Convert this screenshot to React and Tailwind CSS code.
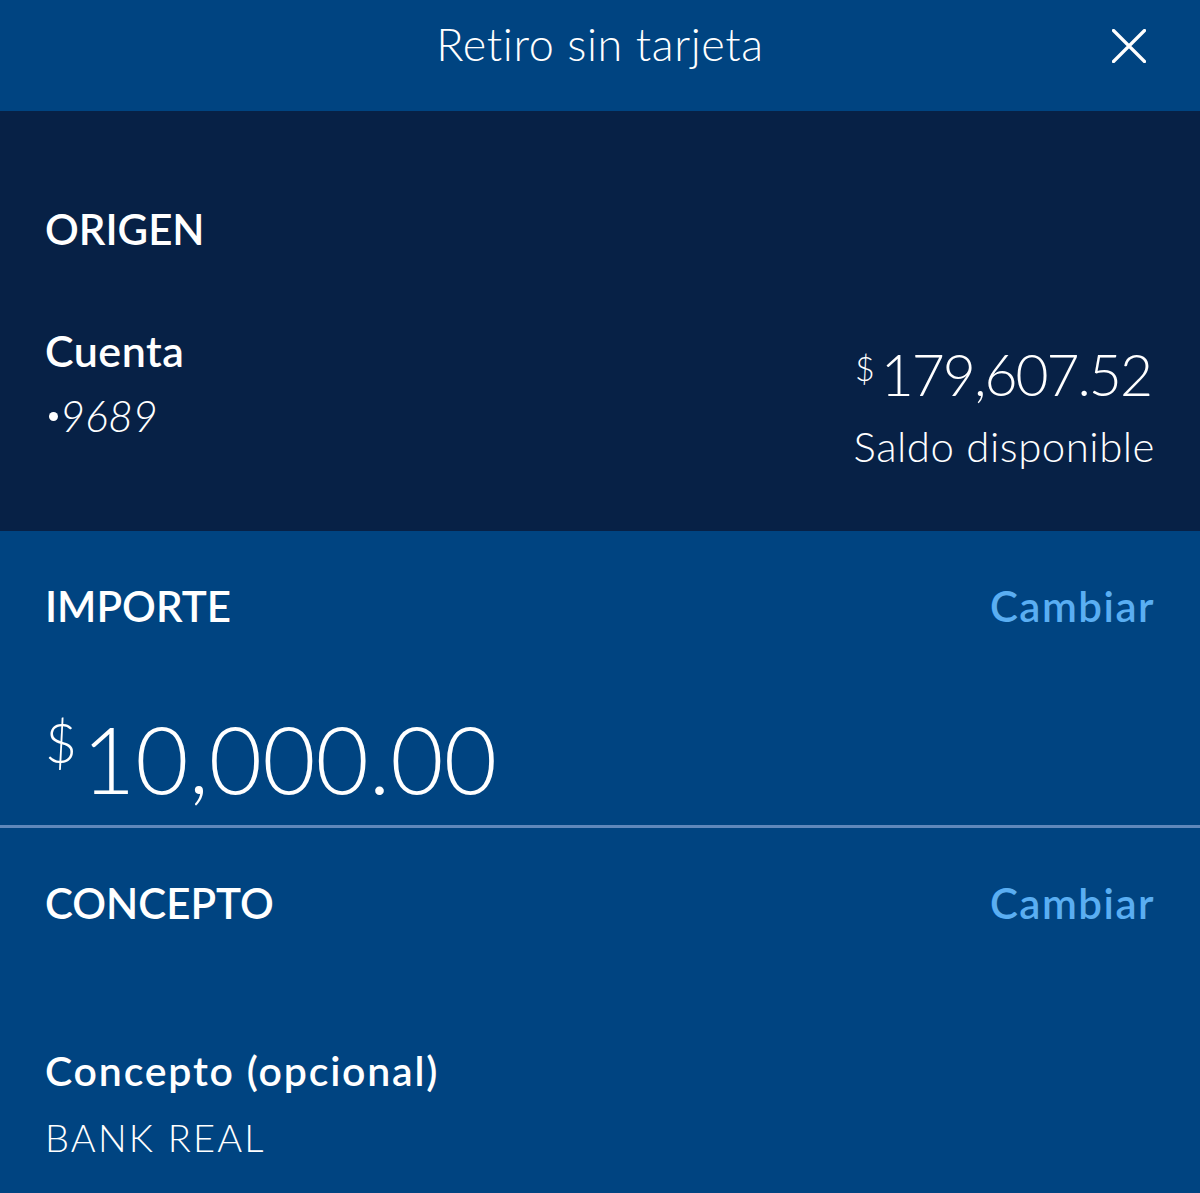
import React from 'react'

const CloseIcon = () => (
  <svg className="w-[34px] h-[34px] mt-[7px]" viewBox="0 0 34 34" fill="none" stroke="white" strokeWidth={3.2} strokeLinecap="round">
    <path d="M1.5 1.5l31 31M32.5 1.5l-31 31" />
  </svg>
)

const SectionHeader = ({ title, action }) => (
  <div className="flex justify-between items-start">
    <span className="text-[42px] leading-none font-semibold text-white">{title}</span>
    {action && (
      <span className="text-[42px] leading-none font-semibold tracking-[1.5px] text-[#5aaef2]">{action}</span>
    )}
  </div>
)

export default function App() {
  return (
    <div className="min-h-[1193px] flex flex-col bg-[#004481] text-white font-['Lato',sans-serif]">
      {/* barra superior */}
      <div className="h-[111px] flex items-start px-[54px] pt-[22px] bg-[#004481]">
        <div className="w-[34px]" />
        <div className="flex-1 text-center text-[45px] leading-none font-light tracking-[0.6px]">Retiro sin tarjeta</div>
        <CloseIcon />
      </div>

      {/* origen */}
      <div className="h-[420px] bg-[#072146] px-[45px] pt-[97px]">
        <SectionHeader title="ORIGEN" />
        <div className="flex justify-between items-start mt-[79px]">
          <div className="flex flex-col">
            <span className="text-[43px] leading-none font-semibold tracking-[0.5px]">Cuenta</span>
            <div className="flex items-center mt-[22px]">
              <span className="w-[9px] h-[9px] rounded-full bg-white ml-[4px] mr-[2px] mt-[2px]" />
              <span className="text-[43px] leading-none font-light italic">9689</span>
            </div>
          </div>
          <div className="flex flex-col items-end">
            <div className="flex items-start mt-[17px] mr-[4px]">
              <span className="text-[34px] leading-none font-light mt-[5px] mr-[6px]">$</span>
              <span className="text-[57px] leading-none font-light tracking-[-2px]">179,607.52</span>
            </div>
            <span className="text-[42px] leading-none font-light tracking-[0.5px] mt-[22px]">Saldo disponible</span>
          </div>
        </div>
      </div>

      {/* importe */}
      <div className="h-[294px] px-[45px] pt-[54px]">
        <SectionHeader title="IMPORTE" action="Cambiar" />
        <div className="flex items-start mt-[86px]">
          <span className="text-[55px] leading-none font-light mt-[2px] mr-[5px]">$</span>
          <span className="text-[92px] leading-none font-light">10,000.00</span>
        </div>
      </div>
      <div className="h-[3px] bg-[#5f88bb]" />

      {/* concepto */}
      <div className="flex-1 px-[45px] pt-[54px]">
        <SectionHeader title="CONCEPTO" action="Cambiar" />
        <div className="flex flex-col mt-[126px]">
          <span className="text-[41px] leading-none font-semibold tracking-[1.8px]">Concepto (opcional)</span>
          <span className="text-[38px] leading-none font-light tracking-[2.2px] mt-[27px]">BANK REAL</span>
        </div>
      </div>
    </div>
  )
}
